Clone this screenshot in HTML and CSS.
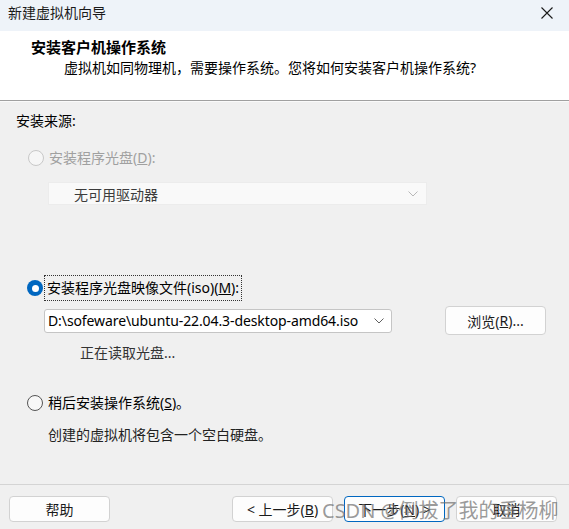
FILE: index.html
```html
<!DOCTYPE html>
<html lang="zh-CN">
<head>
<meta charset="utf-8">
<title>新建虚拟机向导</title>
<link rel="stylesheet" href="styles.css">
</head>
<body>
<div class="window">
  <div class="titlebar">
    <span class="title">新建虚拟机向导</span>
    <svg class="close" width="12" height="12" viewBox="0 0 12 12"><path d="M0.5 0.5 L11.5 11.5 M11.5 0.5 L0.5 11.5" stroke="#1a1a1a" stroke-width="1.1" fill="none"/></svg>
  </div>
  <div class="header">
    <div class="h-title">安装客户机操作系统</div>
    <div class="h-sub">虚拟机如同物理机，需要操作系统。您将如何安装客户机操作系统?</div>
  </div>
  <div class="content">
    <div class="source-label">安装来源:</div>

    <div class="radio-row row-d disabled">
      <span class="radio radio-disabled"></span>
      <span class="label">安装程序光盘(<u>D</u>):</span>
    </div>
    <div class="select select-disabled">
      <span class="select-text">无可用驱动器</span>
      <svg class="chev" width="10" height="6" viewBox="0 0 10 6"><path d="M0.5 0.5 L5 5 L9.5 0.5" stroke="#b8b8b8" stroke-width="1" fill="none"/></svg>
    </div>

    <div class="radio-row row-m">
      <span class="radio radio-checked"></span>
      <span class="label focus">安装程序光盘映像文件(iso)(<u>M</u>):</span>
    </div>
    <div class="iso-row">
      <div class="combo">
        <span class="combo-text">D:\sofeware\ubuntu-22.04.3-desktop-amd64.iso</span>
        <svg class="chev" width="10" height="6" viewBox="0 0 10 6"><path d="M0.5 0.5 L5 5 L9.5 0.5" stroke="#606060" stroke-width="1" fill="none"/></svg>
      </div>
      <button class="btn browse">浏览(<u>R</u>)...</button>
    </div>
    <div class="reading">正在读取光盘...</div>

    <div class="radio-row row-s">
      <span class="radio radio-empty"></span>
      <span class="label">稍后安装操作系统(<u>S</u>)。</span>
    </div>
    <div class="note">创建的虚拟机将包含一个空白硬盘。</div>
  </div>
  <div class="footer">
    <button class="btn fbtn">帮助</button>
    <div class="nav">
      <button class="btn fbtn">&lt; 上一步(<u>B</u>)</button>
      <button class="btn fbtn default">下一步(<u>N</u>) &gt;</button>
      <button class="btn fbtn">取消</button>
    </div>
    <div class="watermark">CSDN @倒拔了我的垂杨柳</div>
  </div>
</div>
</body>
</html>
```
FILE: styles.css
```css
* { box-sizing: border-box; }
html, body { margin: 0; padding: 0; }
body {
  width: 569px;
  height: 529px;
  overflow: hidden;
  background: #f0f0f0;
  font-family: "Noto Sans", "Noto Sans CJK SC", sans-serif;
  font-size: 14px;
  color: #000;
}
.window {
  height: 529px;
  display: flex;
  flex-direction: column;
}
.titlebar {
  height: 31px;
  background: #eef3f9;
  display: flex;
  align-items: center;
  justify-content: space-between;
  padding: 0 16px 6px 8px;
}
.title { font-size: 14px; line-height: 20px; color: #1a1a1a; }
.close { display: block; }

.header {
  height: 70px;
  background: #fff;
  border-bottom: 1px solid #a0a0a0;
  padding-top: 6px;
  padding-left: 31px;
}
.h-title { font-weight: bold; font-size: 15px; line-height: 20px; }
.h-sub { padding-left: 33px; line-height: 22px; }

.content {
  flex: 1;
  border-top: 1px solid #fafafa;
  padding: 9px 0 0 16px;
}
.source-label { line-height: 20px; }

.radio-row {
  display: flex;
  align-items: center;
  height: 20px;
}
.radio-row .label { margin-left: 5px; line-height: 20px; }
.row-d { margin-top: 17px; padding-left: 12px; }
.disabled { color: #a0a0a0; }
.radio {
  width: 16px;
  height: 16px;
  border-radius: 50%;
  flex: none;
}
.radio-disabled { border: 1px solid #c8c8c8; background: #f6f6f6; }
.radio-empty { border: 1px solid #555; background: #f7f7f7; }
.radio-checked {
  background: #0067c0;
  display: flex;
  align-items: center;
  justify-content: center;
}
.radio-checked::after {
  content: "";
  width: 7px;
  height: 7px;
  border-radius: 50%;
  background: #fff;
}

.select {
  margin-top: 14px;
  margin-left: 32px;
  width: 379px;
  height: 23px;
  display: flex;
  align-items: center;
  justify-content: space-between;
  padding: 0 8px 0 25px;
}
.select-disabled { background: #f9f9f9; color: #3c3c3c; border: 1px solid #ececec; }
.chev { display: block; }

.row-m { margin-top: 70px; padding-left: 11px; height: 26px; }
.row-m .label { margin-left: 1px; }
.focus {
  border: 1px dotted #333;
  padding: 1px 2px;
  line-height: 22px !important;
}

.iso-row {
  display: flex;
  align-items: center;
  margin-top: 5px;
  padding-left: 28px;
}
.combo {
  width: 348px;
  height: 24px;
  background: #fff;
  border: 1px solid #c5c5c5;
  border-radius: 3px;
  display: flex;
  align-items: center;
  justify-content: space-between;
  padding: 0 7px 0 3px;
}
.combo-text { font-size: 14px; letter-spacing: -0.1px; }

.btn {
  font-family: "Noto Sans", "Noto Sans CJK SC", sans-serif;
  font-size: 14px;
  color: #1a1a1a;
  background: #fdfdfd;
  border: 1px solid #d2d2d2;
  border-radius: 4px;
  padding: 0;
  display: flex;
  align-items: center;
  justify-content: center;
}
.browse {
  margin-left: 53px;
  width: 101px;
  height: 29px;
}

.reading { margin-top: 8px; padding-left: 64px; line-height: 20px; color: #333; }
.row-s { margin-top: 30px; padding-left: 11px; }
.row-s .label { margin-left: 5px; }
.note { margin-top: 12px; padding-left: 32px; line-height: 20px; color: #222; }

.footer {
  position: relative;
  height: 45px;
  border-top: 1px solid #d4d4d4;
  display: flex;
  align-items: flex-start;
  justify-content: space-between;
  padding: 11px 12px 0 9px;
}
.fbtn { width: 101px; height: 26px; }
.nav { display: flex; gap: 11px; }
.default { border: 1px solid #0067c0; }
.watermark {
  position: absolute;
  left: 322px;
  top: 14px;
  font-family: "Noto Sans", "Noto Sans CJK SC", sans-serif;
  font-size: 20px;
  line-height: 24px;
  color: rgba(110, 110, 110, 0.7);
  white-space: nowrap;
  pointer-events: none;
}
```
